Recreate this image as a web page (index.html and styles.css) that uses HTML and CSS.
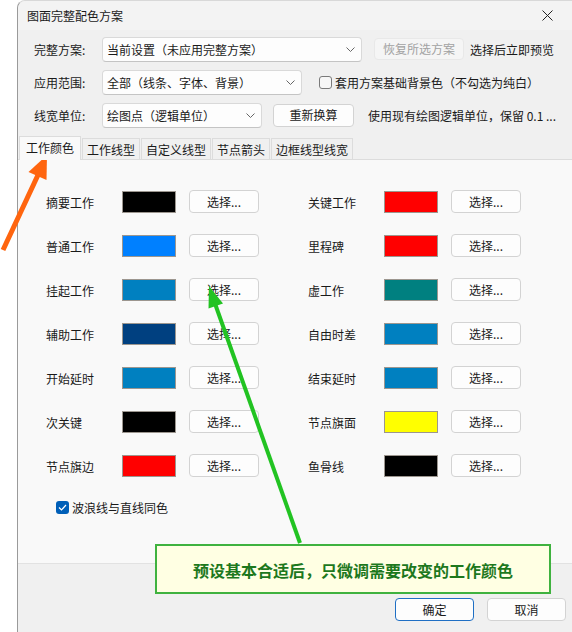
FILE: index.html
```html
<!DOCTYPE html>
<html lang="zh-CN">
<head>
<meta charset="utf-8">
<title>图面完整配色方案</title>
<link rel="stylesheet" href="styles.css">
</head>
<body>
<div class="window">
  <div class="titlebar">
    <span class="title">图面完整配色方案</span>
    <svg class="close" width="11" height="11" viewBox="0 0 11 11"><path d="M0.5 0.5 L10.5 10.5 M10.5 0.5 L0.5 10.5" stroke="#222" stroke-width="1"/></svg>
  </div>

  <div class="settings">
    <div class="row">
      <span class="label">完整方案:</span>
      <div class="combo combo-scheme"><span>当前设置（未应用完整方案）</span><svg class="chev" width="9" height="5" viewBox="0 0 9 5"><path d="M0.5 0.5 L4.5 4.5 L8.5 0.5" fill="none" stroke="#666" stroke-width="1"/></svg></div>
      <button class="btn btn-disabled btn-restore">恢复所选方案</button>
      <span class="note">选择后立即预览</span>
    </div>
    <div class="row">
      <span class="label">应用范围:</span>
      <div class="combo combo-range"><span>全部（线条、字体、背景）</span><svg class="chev" width="9" height="5" viewBox="0 0 9 5"><path d="M0.5 0.5 L4.5 4.5 L8.5 0.5" fill="none" stroke="#666" stroke-width="1"/></svg></div>
      <span class="box box-bg"></span>
      <span class="note">套用方案基础背景色（不勾选为纯白）</span>
    </div>
    <div class="row">
      <span class="label">线宽单位:</span>
      <div class="combo combo-unit"><span>绘图点（逻辑单位）</span><svg class="chev" width="9" height="5" viewBox="0 0 9 5"><path d="M0.5 0.5 L4.5 4.5 L8.5 0.5" fill="none" stroke="#666" stroke-width="1"/></svg></div>
      <button class="btn btn-recalc">重新换算</button>
      <span class="note note-unit">使用现有绘图逻辑单位，保留 0.1 ...</span>
    </div>
  </div>

  <div class="tabs">
    <span class="tab tab-active">工作颜色</span>
    <span class="tab">工作线型</span>
    <span class="tab">自定义线型</span>
    <span class="tab">节点箭头</span>
    <span class="tab">边框线型线宽</span>
  </div>

  <div class="panel">
    <div class="colors">
      <div class="item"><span class="name">摘要工作</span><span class="swatch c-black"></span><button class="btn pick">选择...</button></div>
      <div class="item"><span class="name">关键工作</span><span class="swatch c-red"></span><button class="btn pick">选择...</button></div>
      <div class="item"><span class="name">普通工作</span><span class="swatch c-azure"></span><button class="btn pick">选择...</button></div>
      <div class="item"><span class="name">里程碑</span><span class="swatch c-red"></span><button class="btn pick">选择...</button></div>
      <div class="item"><span class="name">挂起工作</span><span class="swatch c-blue"></span><button class="btn pick">选择...</button></div>
      <div class="item"><span class="name">虚工作</span><span class="swatch c-teal"></span><button class="btn pick">选择...</button></div>
      <div class="item"><span class="name">辅助工作</span><span class="swatch c-navy"></span><button class="btn pick">选择...</button></div>
      <div class="item"><span class="name">自由时差</span><span class="swatch c-blue"></span><button class="btn pick">选择...</button></div>
      <div class="item"><span class="name">开始延时</span><span class="swatch c-blue"></span><button class="btn pick">选择...</button></div>
      <div class="item"><span class="name">结束延时</span><span class="swatch c-blue"></span><button class="btn pick">选择...</button></div>
      <div class="item"><span class="name">次关键</span><span class="swatch c-black"></span><button class="btn pick">选择...</button></div>
      <div class="item"><span class="name">节点旗面</span><span class="swatch c-yellow"></span><button class="btn pick">选择...</button></div>
      <div class="item"><span class="name">节点旗边</span><span class="swatch c-red"></span><button class="btn pick">选择...</button></div>
      <div class="item"><span class="name">鱼骨线</span><span class="swatch c-black"></span><button class="btn pick">选择...</button></div>
    </div>
    <div class="wave">
      <span class="box box-on"><svg width="9" height="7" viewBox="0 0 9 7"><path d="M1 3.5 L3.5 6 L8 1" fill="none" stroke="#fff" stroke-width="1.2"/></svg></span>
      <span class="note">波浪线与直线同色</span>
    </div>
  </div>

  <div class="footer">
    <button class="btn btn-default">确定</button>
    <button class="btn btn-footer">取消</button>
  </div>
</div>

<div class="callout">预设基本合适后，只微调需要改变的工作颜色</div>

<svg class="arrows" width="572" height="632" viewBox="0 0 572 632">
  <line x1="3" y1="250" x2="38" y2="175" stroke="#ff650f" stroke-width="5"/>
  <polygon points="47,155 46.5,180 28.5,172" fill="#ff650f"/>
  <line x1="300" y1="543" x2="215.5" y2="305" stroke="#22c322" stroke-width="4"/>
  <polygon points="209,286 223,303.5 208.5,308.5" fill="#22c322"/>
</svg>
</body>
</html>
```

FILE: styles.css
```css
html, body {
  margin: 0;
  padding: 0;
  overflow: hidden;
}

body {
  width: 572px;
  height: 632px;
  background: #ffffff;
  font-family: "Noto Sans CJK SC", "Noto Sans", sans-serif;
  font-size: 12px;
  color: #1a1a1a;
  position: relative;
}

.window {
  margin-left: 17px;
  width: 565px;
  height: 632px;
  background: #f0f0f0;
  border-left: 1px solid #9a9a9a;
  border-top: 1px solid #d8d8d8;
  border-top-left-radius: 8px;
  box-sizing: border-box;
  display: flex;
  flex-direction: column;
}

.titlebar {
  height: 29px;
  display: flex;
  align-items: center;
  justify-content: space-between;
  padding-left: 9px;
  background: #f3f3f3;
  border-top-left-radius: 8px;
}

.title {
  font-size: 12px;
  line-height: 14px;
}

.close {
  margin-right: 29px;
}

.settings {
  display: flex;
  flex-direction: column;
  gap: 8px;
  padding: 7px 0 0 16px;
}

.row {
  display: flex;
  align-items: center;
  height: 25px;
}

.label {
  width: 68px;
  flex: none;
}

.combo {
  height: 25px;
  box-sizing: border-box;
  background: #fdfdfd;
  border: 1px solid #d9d9d9;
  border-bottom-color: #c4c4c4;
  border-radius: 4px;
  display: flex;
  align-items: center;
  justify-content: space-between;
  padding: 0 6px 0 4px;
  flex: none;
}

.combo-scheme { width: 260px; }
.combo-range { width: 200px; }
.combo-unit { width: 160px; }

.btn {
  font-family: inherit;
  font-size: 12px;
  color: #1a1a1a;
  background: #fdfdfd;
  border: 1px solid #d3d3d3;
  border-radius: 4px;
  height: 23px;
  padding: 0;
  box-sizing: border-box;
  line-height: 20px;
  flex: none;
}

.btn-restore {
  width: 90px;
  height: 22px;
  margin: -2px 6px 0 12px;
}

.btn-disabled {
  background: #f5f5f5;
  border-color: #e8e8e8;
  color: #a2a2a2;
}

.btn-recalc {
  width: 81px;
  margin: -1px 14px 0 11px;
}

.note {
  white-space: nowrap;
}

.box {
  width: 13px;
  height: 13px;
  box-sizing: border-box;
  border-radius: 3px;
  flex: none;
  display: flex;
  align-items: center;
  justify-content: center;
}

.box-bg {
  border: 1px solid #7a7a7a;
  background: #f7f7f7;
  margin: 0 3px 0 17px;
}

.box-on {
  background: #005fb8;
  margin-right: 3px;
}

.tabs {
  display: flex;
  align-items: flex-end;
  height: 24px;
  margin: 8px 0 -1px 1px;
  position: relative;
  z-index: 1;
}

.tab {
  height: 21px;
  box-sizing: border-box;
  margin-bottom: 1px;
  margin-right: 1px;
  padding: 0 4px;
  border: 1px solid #dcdcdc;
  border-bottom: none;
  background: #f0f0f0;
  display: flex;
  align-items: center;
}

.tab-active {
  height: 24px;
  margin-bottom: 0;
  padding: 0 6px 2px;
  background: #f9f9f9;
}

.panel {
  height: 405px;
  box-sizing: border-box;
  background: #f9f9f9;
  border-top: 1px solid #dcdcdc;
  border-bottom: 1px solid #e2e2e2;
  padding: 30px 0 0 28px;
}

.colors {
  display: grid;
  grid-template-columns: 262px auto;
  row-gap: 21px;
}

.item {
  display: flex;
  align-items: center;
  height: 23px;
}

.name {
  width: 76px;
  flex: none;
  padding-top: 2px;
}

.swatch {
  width: 54px;
  height: 22px;
  box-sizing: border-box;
  border: 1px solid #9c968f;
  margin-right: 13px;
  flex: none;
}

.c-black { background: #000000; }
.c-red { background: #ff0000; }
.c-azure { background: #0080ff; }
.c-blue { background: #0080c0; }
.c-teal { background: #008080; }
.c-navy { background: #004080; }
.c-yellow { background: #ffff00; }

.pick {
  width: 70px;
}

.wave {
  display: flex;
  align-items: center;
  margin: 22px 0 0 10px;
}

.footer {
  display: flex;
  justify-content: flex-end;
  gap: 13px;
  padding: 34px 16px 0 0;
}

.btn-default {
  width: 79px;
  border-color: #1f6fc4;
}

.btn-footer {
  width: 79px;
}

.callout {
  position: absolute;
  left: 155px;
  top: 544px;
  width: 396px;
  height: 50px;
  box-sizing: border-box;
  border: 2px solid #3fb23f;
  background: #ffffe3;
  color: #1d781d;
  font-size: 16px;
  font-weight: bold;
  display: flex;
  align-items: center;
  justify-content: center;
  padding-top: 1px;
}

.arrows {
  position: absolute;
  left: 0;
  top: 0;
  pointer-events: none;
}
```
